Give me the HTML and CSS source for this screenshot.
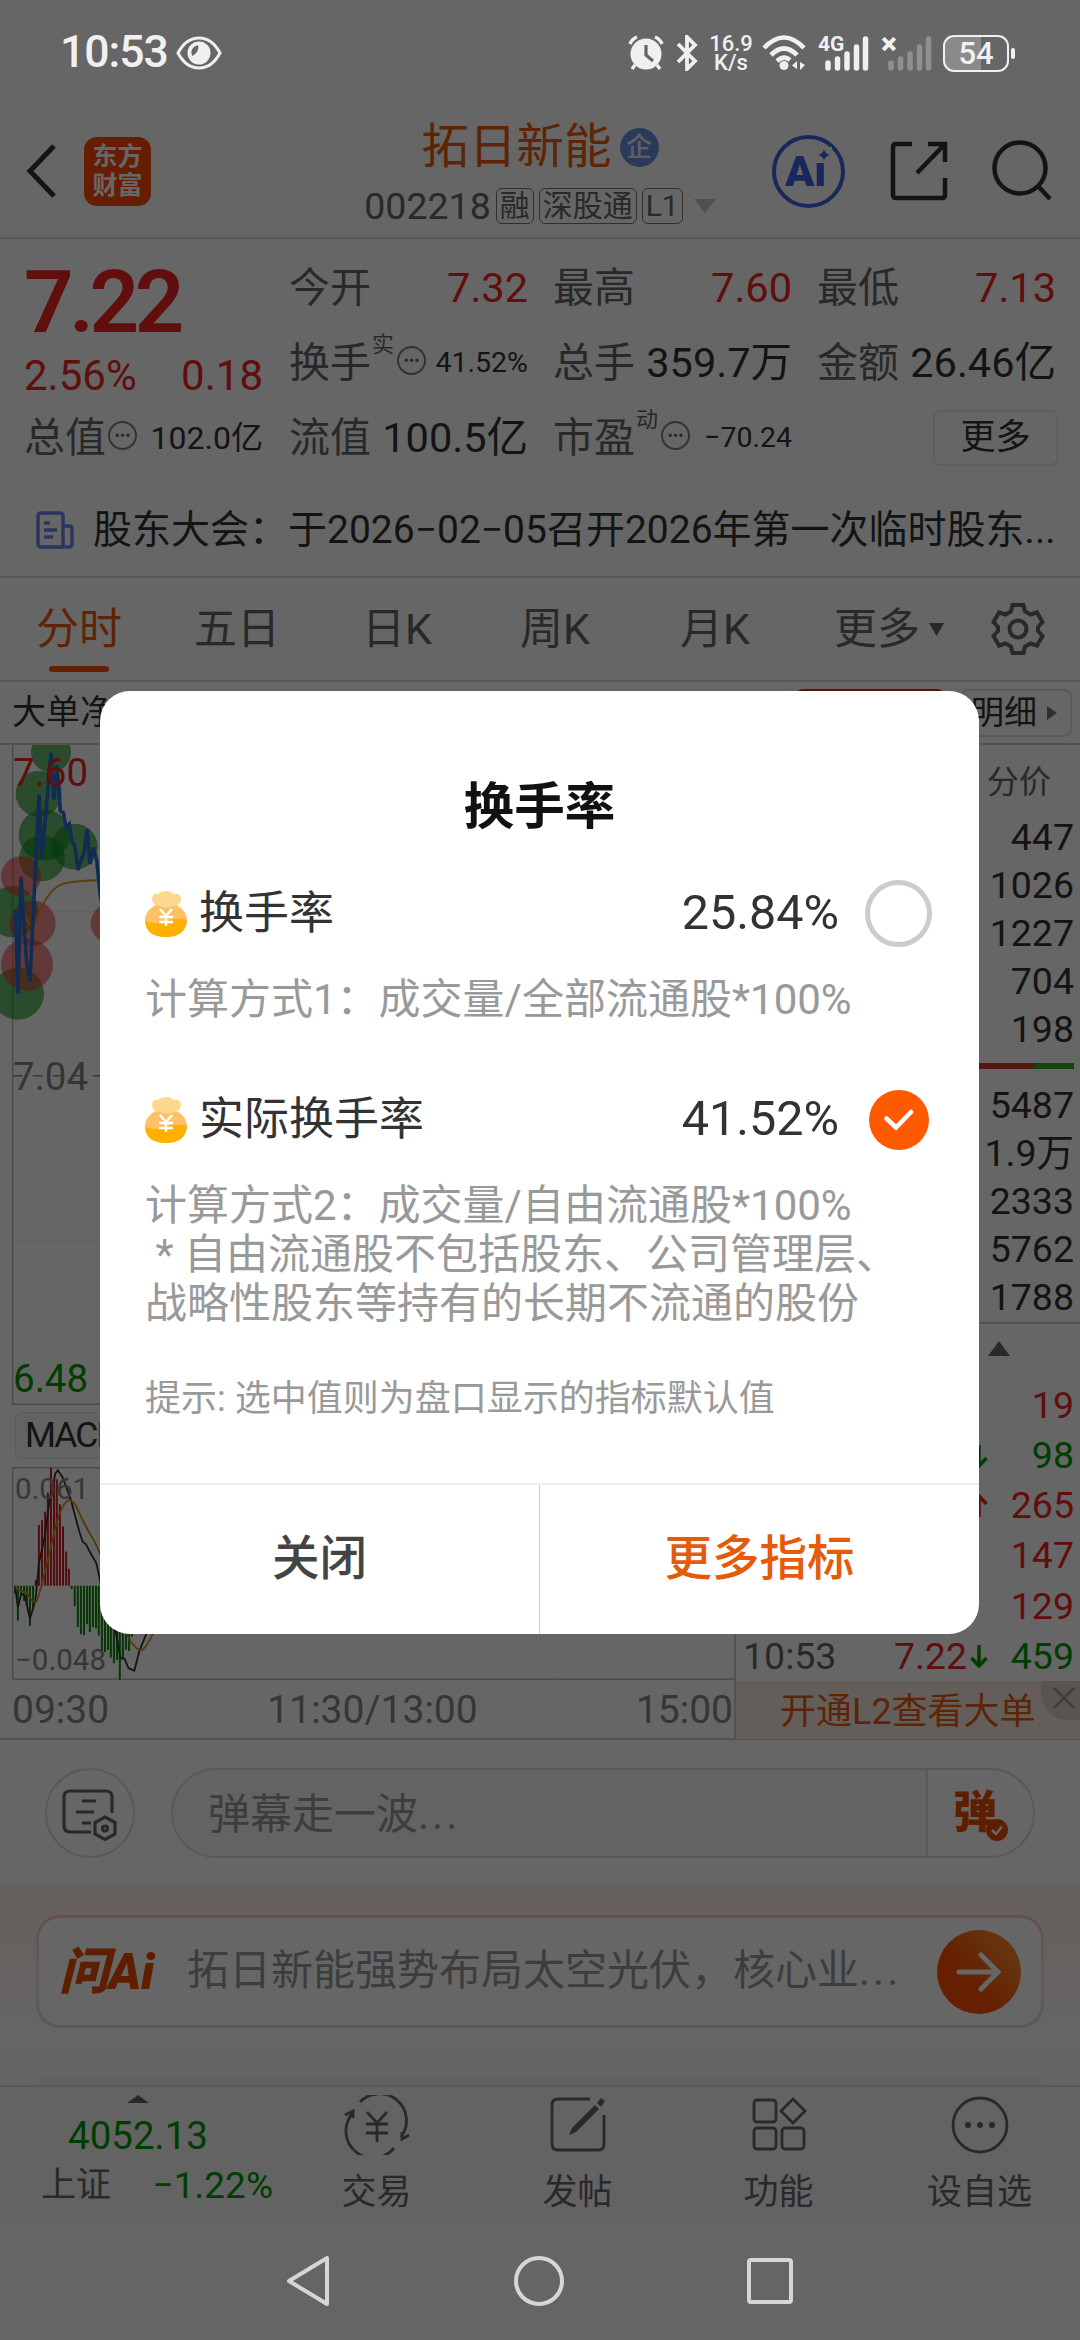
FILE: index.html
```html
<!DOCTYPE html>
<html lang="zh-CN">
<head>
  <meta charset="UTF-8">
  <meta name="viewport" content="width=device-width, initial-scale=1.0">
  <title>拓日新能 002218</title>
  <link rel="stylesheet" href="styles.css">
</head>
<body>

  <div class="app">
    <header class="header">
      <div class="header-left">
        <svg class="back" width="32" height="56" viewBox="0 0 32 56"><path d="M28 3L4 28L28 53"/></svg>
        <div class="logo"><span>东方</span><span>财富</span></div>
      </div>
      <div class="header-title">
        <div class="name">拓日新能<span class="badge">企</span></div>
        <div class="code">002218<span class="tag">融</span><span class="tag">深股通</span><span class="tag">L1</span>
          <svg width="22" height="14" viewBox="0 0 22 14"><path d="M0 0H22L11 14Z" fill="#c8c8c8"/></svg>
        </div>
      </div>
      <div class="header-right">
        <div class="ai-btn">Ai<svg width="16" height="16" viewBox="0 0 16 16"><rect width="16" height="16" fill="#fff"/><path d="M8 2Q9 7 14 8Q9 9 8 14Q7 9 2 8Q7 7 8 2Z"/></svg></div>
        <svg class="line-icon" width="58" height="60" viewBox="0 0 58 60"><path d="M22 3H6Q3 3 3 6V54Q3 57 6 57H52Q55 57 55 54V37M38 3H55V21M55 3L27 32"/></svg>
        <svg class="line-icon" width="60" height="62" viewBox="0 0 60 62"><circle cx="28" cy="28" r="25.5"/><path d="M46 46L58 59"/></svg>
      </div>
    </header>

    <section class="quote">
      <div class="quote-main">
        <div class="price">7.22</div>
        <div class="change"><span>2.56%</span><span>0.18</span></div>
        <div class="cell"><label>总值</label><i class="more-dot">•••</i><b class="small32">102.0亿</b></div>
      </div>
      <div class="quote-grid">
        <div class="cell"><label>今开</label><b class="red">7.32</b></div>
        <div class="cell"><label>最高</label><b class="red">7.60</b></div>
        <div class="cell"><label>最低</label><b class="red">7.13</b></div>
        <div class="cell"><label>换手</label><sup>实</sup><i class="more-dot">•••</i><b class="small28">41.52%</b></div>
        <div class="cell"><label>总手</label><b>359.7万</b></div>
        <div class="cell"><label>金额</label><b>26.46亿</b></div>
        <div class="cell"><label>流值</label><b>100.5亿</b></div>
        <div class="cell"><label>市盈</label><sup>动</sup><i class="more-dot">•••</i><b class="small28">−70.24</b></div>
        <div class="cell"><button class="more-btn">更多</button></div>
      </div>
    </section>

    <section class="news">
      <svg width="38" height="38" viewBox="0 0 38 38"><path d="M27 36H5Q2 36 2 33V5Q2 2 5 2H24Q27 2 27 5V36H33Q36 36 36 33V18Q36 15 33 15H27M8 12H14M8 19H21M8 26H17"/></svg>
      <p>股东大会：于2026−02−05召开2026年第一次临时股东...</p>
    </section>

    <nav class="tabs">
      <a class="active">分时</a>
      <a>五日</a>
      <a>日K</a>
      <a>周K</a>
      <a>月K</a>
      <a>更多<svg width="15" height="13" viewBox="0 0 15 13"><path d="M0 0H15L7.5 13Z"/></svg></a>
      <svg class="gear" width="54" height="54" viewBox="0 0 54 54"><path d="M21.500 3H32.500L34 9.500L39.500 12.500L46 10.500L51.500 20L47 25V29L51.500 34L46 43.500L39.500 41.500L34 44.500L32.500 51H21.500L20 44.500L14.500 41.500L8 43.500L2.500 34L7 29V25L2.500 20L8 10.500L14.500 12.500L20 9.500Z"/><circle cx="27" cy="27" r="8.500"/></svg>
    </nav>

    <div class="chart-bar">
      <span>大单净量</span>
      <div class="chart-bar-right">
        <div class="l2-tab"></div>
        <div class="detail-btn">明细<svg width="10" height="14" viewBox="0 0 10 14"><path d="M0 0L10 7L0 14Z"/></svg></div>
      </div>
    </div>

    <section class="market">
      <div class="charts">
        <div class="price-chart">
          <svg viewBox="0 195 2202 1980" preserveAspectRatio="none">
            <path class="frame" d="M38 195V2173H2202"/>
            <path class="dots" d="M38 694H2202M38 1683H2202"/>
            <path class="dash" d="M38 1187H2202"/>
            <g class="sell">
              <circle cx="153" cy="217" r="60"/><circle cx="116" cy="341" r="69"/><circle cx="133" cy="465" r="77"/>
              <circle cx="224" cy="500" r="69"/><circle cx="126" cy="535" r="69"/><circle cx="38" cy="695" r="77"/><circle cx="54" cy="941" r="78"/>
            </g>
            <g class="buy">
              <circle cx="63" cy="589" r="60"/><circle cx="98" cy="730" r="69"/><circle cx="81" cy="854" r="78"/><circle cx="332" cy="730" r="60"/>
            </g>
            <path class="avg" d="M46 690L54 780L63 720Q78 700 82 722Q96 750 106 725Q112 710 122 688Q150 625 190 611Q230 602 300 600L420 606"/>
            <path class="line" d="M46 690L54 941L63 590L80 850L90 905L117 343L126 535L153 218L162 358L171 255L181 393L190 398L198 442L208 432L216 485L225 500L234 570L243 540L252 520L261 448L270 552L280 502L290 540L300 640L320 760"/>
          </svg>
          <span class="lbl top">7.60</span>
          <span class="lbl mid">7.04</span>
          <span class="lbl low">6.48</span>
        </div>
        <div class="macd-bar"><span>MACD</span></div>
        <div class="macd-chart">
          <svg viewBox="0 806 2132 595" preserveAspectRatio="none">
            <path class="frame" d="M37 1399V808H2132M37 1399H2132"/>
            <path class="dots" d="M564 808V1400M1084 808V1400M1604 808V1400"/>
            <path class="up" d="M104 1138V1122M113 1138V968M122 1138V955M131 1138V930M139 1138V877M148 1138V808M157 1138V852M165 1138V840M174 1138V910M183 1138V972M192 1138V1042M200 1138V1090"/>
            <path class="down" d="M44 1138V1160M52 1138V1235M61 1138V1165M70 1138V1180M78 1138V1195M87 1138V1250M96 1138V1205M208 1138V1147M217 1138V1195M226 1138V1253M235 1138V1273M244 1138V1276M253 1138V1245M261 1138V1267M270 1138V1253M279 1138V1257M287 1138V1277M296 1138V1325M305 1138V1323M314 1138V1317M322 1138V1338M331 1138V1354M340 1138V1345M348 1138V1400M357 1138V1340M366 1138V1316M375 1138V1320M383 1138V1280"/>
            <path class="dif" d="M44 1140L52 1198L62 1160L72 1165L87 1230L98 1195L103 1178L113 1075L130 1000L145 890L153 870L160 825L168 815L182 835L205 895L230 985L240 1015L250 1022L262 1045L280 1075L290 1120L300 1180L335 1260L350 1340L362 1342L373 1368L390 1375L405 1320L425 1272L450 1230"/>
            <path class="dea" d="M44 1142Q65 1155 80 1160Q95 1185 103 1185Q110 1180 125 1120Q140 1060 155 1000Q175 910 200 898Q215 898 228 930Q250 975 275 1015Q300 1060 330 1170Q365 1270 380 1295Q400 1320 412 1318Q425 1310 445 1270L470 1220"/>
          </svg>
          <span class="lbl top">0.061</span>
          <span class="lbl low">−0.048</span>
        </div>
        <div class="time-axis"><span>09:30</span><span>11:30/13:00</span><span>15:00</span></div>
      </div>

      <div class="side">
        <div class="side-head">分价</div>
        <div class="row5"><span>447</span><span>1026</span><span>1227</span><span>704</span><span>198</span></div>
        <div class="ratio"><i></i></div>
        <div class="row5"><span>5487</span><span>1.9万</span><span>2333</span><span>5762</span><span>1788</span></div>
        <div class="fold"><svg width="22" height="15" viewBox="0 0 22 15"><path d="M11 0L22 15H0Z"/></svg></div>
        <div class="ticks">
          <div class="tick r"><time></time><em></em><svg viewBox="0 0 18 24"></svg><b>19</b></div>
          <div class="tick g"><time></time><em></em><svg viewBox="0 0 18 24"><path d="M9 1V22M1.500 14L9 22L16.500 14"/></svg><b>98</b></div>
          <div class="tick r"><time></time><em></em><svg viewBox="0 0 18 24"><path d="M9 23V2M1.500 10L9 2L16.500 10"/></svg><b>265</b></div>
          <div class="tick r"><time></time><em></em><svg viewBox="0 0 18 24"></svg><b>147</b></div>
          <div class="tick r"><time></time><em></em><svg viewBox="0 0 18 24"></svg><b>129</b></div>
          <div class="tick g"><time>10:53</time><em>7.22</em><svg viewBox="0 0 18 24"><path d="M9 1V22M1.500 14L9 22L16.500 14"/></svg><b>459</b></div>
        </div>
        <div class="l2-banner">开通L2查看大单
          <div class="close"><svg width="22" height="22" viewBox="0 0 22 22"><path d="M1 1L21 21M21 1L1 21"/></svg></div>
        </div>
      </div>
    </section>

    <section class="danmu">
      <div class="round-btn">
        <svg width="56" height="52" viewBox="0 0 56 52"><path d="M29 43H8Q2 43 2 37V8Q2 2 8 2H44Q50 2 50 8V24M20 12H34M14 23H32M20 34H29"/><path d="M43 28L53 33.500V45L43 50.500L33 45V33.500Z"/><circle cx="43" cy="39.500" r="2.500"/></svg>
      </div>
      <div class="danmu-box">
        <div class="danmu-input">弹幕走一波<span class="ellipsis">...</span></div>
        <div class="danmu-on">弹<svg width="22" height="22" viewBox="0 0 22 22"><circle cx="11" cy="11" r="11"/><path d="M6 11L10 15L16 7.500"/></svg></div>
      </div>
    </section>

    <section class="ask">
      <div class="ask-card">
        <div class="ask-logo">问Ai</div>
        <p>拓日新能强势布局太空光伏，核心业<span class="ellipsis">...</span></p>
        <div class="go"><svg width="46" height="40" viewBox="0 0 46 40"><path d="M3 20H41M25 3L42 20L25 37"/></svg></div>
      </div>
      <div class="next-card"></div>
    </section>

    <footer class="tabbar">
      <div class="index">
        <svg width="22" height="8" viewBox="0 0 22 8"><path d="M11 0L22 8H0Z"/></svg>
        <div class="index-val">4052.13</div>
        <div class="index-row"><span>上证</span><b>−1.22%</b></div>
      </div>
      <div class="item">
        <svg viewBox="0 0 66 60"><path d="M16 7A27 27 0 0 1 57 42M50 53A27 27 0 0 1 8 19M1 20L9 16V23M65 40L58 44V37"/><path d="M23 17L33 28L43 17M33 28V47M22 29H44M22 38H44"/></svg>
        <span>交易</span>
      </div>
      <div class="item">
        <svg viewBox="0 0 66 60"><path d="M45 4H13Q7 4 7 10V49Q7 55 13 55H53Q59 55 59 49V20"/><path class="fill" d="M27 33L50 10L54 14L31 37L24 40ZM52 8L56 3L60 6L56 12Z"/></svg>
        <span>发帖</span>
      </div>
      <div class="item">
        <svg viewBox="0 0 66 60"><rect x="8" y="5" width="22" height="22" rx="3"/><rect x="8" y="33" width="22" height="21" rx="3"/><rect x="36" y="33" width="22" height="21" rx="3"/><path d="M47 4L59 16L47 28L35 16Z"/></svg>
        <span>功能</span>
      </div>
      <div class="item">
        <svg viewBox="0 0 66 60"><circle cx="33" cy="30" r="27"/><g class="fill"><circle cx="21" cy="30" r="3"/><circle cx="33" cy="30" r="3"/><circle cx="45" cy="30" r="3"/></g></svg>
        <span>设自选</span>
      </div>
    </footer>
  </div>

  <div class="overlay">
    <div class="dialog">
      <h2>换手率</h2>
      <div class="option">
        <svg class="bag" viewBox="0 0 42 46"><ellipse cx="21" cy="29" rx="21" ry="17" fill="#ffc166"/><path d="M0 30Q10 34 21 30T42 29Q41 46 21 46T0 30Z" fill="#ffb000"/><path d="M7 8Q7 2 13 3Q16 0 21 0Q26 0 28 3Q36 2 36 8Q36 15 28 15Q21 18 14 15Q7 14 7 8Z" fill="#ffd88f"/><path d="M15 18L21 25L27 18M21 25V35M14 26H28M14 31H28" fill="none" stroke="#fff" stroke-width="2.400"/></svg>
        <span class="opt-name">换手率</span>
        <span class="opt-val">25.84%</span>
        <i class="radio"></i>
      </div>
      <p class="desc">计算方式1：成交量/全部流通股*100%</p>
      <div class="option">
        <svg class="bag" viewBox="0 0 42 46"><ellipse cx="21" cy="29" rx="21" ry="17" fill="#ffc166"/><path d="M0 30Q10 34 21 30T42 29Q41 46 21 46T0 30Z" fill="#ffb000"/><path d="M7 8Q7 2 13 3Q16 0 21 0Q26 0 28 3Q36 2 36 8Q36 15 28 15Q21 18 14 15Q7 14 7 8Z" fill="#ffd88f"/><path d="M15 18L21 25L27 18M21 25V35M14 26H28M14 31H28" fill="none" stroke="#fff" stroke-width="2.400"/></svg>
        <span class="opt-name">实际换手率</span>
        <span class="opt-val">41.52%</span>
        <i class="radio checked"><svg width="30" height="22" viewBox="0 0 30 22"><path d="M2.500 9.500L12 18.500L27 3"/></svg></i>
      </div>
      <p class="desc">计算方式2：成交量/自由流通股*100%<br>&nbsp;* 自由流通股不包括股东、公司管理层、<br>战略性股东等持有的长期不流通的股份</p>
      <p class="hint">提示: 选中值则为盘口显示的指标默认值</p>
      <div class="actions">
        <button>关闭</button>
        <button class="primary">更多指标</button>
      </div>
    </div>
  </div>

  <div class="status">
    <div class="status-left">
      <span>10:53</span>
      <svg width="46" height="34" viewBox="0 0 46 34"><path d="M2 17Q10 2 23 2T44 17Q36 32 23 32T2 17Z" fill="none" stroke="#f0f0f0" stroke-width="3"/><circle cx="23" cy="17" r="11.500" fill="#f0f0f0"/><path d="M22 9Q24 16 16 20Q13 12 22 9Z" fill="#666"/></svg>
    </div>
    <div class="status-right">
      <svg width="36" height="36" viewBox="0 0 36 36"><circle cx="18" cy="19" r="15.500" fill="#f0f0f0"/><path d="M18 10V20L25 26" stroke="#666" stroke-width="3.200" fill="none"/><path d="M2 9Q4 4 9 2M34 9Q32 4 27 2M7 30L4 34M29 30L32 34" stroke="#f0f0f0" stroke-width="3.400" fill="none"/></svg>
      <svg class="bt" width="22" height="36" viewBox="0 0 22 36"><path d="M2 9L19 26L11 34V2L19 10L2 27" fill="none" stroke="#f0f0f0" stroke-width="3.800"/></svg>
      <div class="speed"><span>16.9</span><span>K/s</span></div>
      <svg class="wifi" width="44" height="36" viewBox="0 0 44 36"><path d="M2 13Q22 -8 42 13M9 20Q22 7 35 20M15 26Q22 20 28 25" fill="none" stroke="#f0f0f0" stroke-width="4.600"/><circle cx="22" cy="30.500" r="4.500" fill="#f0f0f0"/><path d="M35 26V34L30 30.500ZM38 27V35L43 30Z" fill="#f0f0f0"/></svg>
      <div class="signal"><span>4G</span><svg width="44" height="36" viewBox="0 0 44 36"><path d="M3 28V33M12.500 24V33M22 19V33M31.500 12V33M40.500 4V33"/></svg></div>
      <div class="signal none"><span>×</span><svg width="44" height="36" viewBox="0 0 44 36"><path d="M3 28V33M12.500 24V33M22 19V33M31.500 12V33M40.500 4V33"/></svg></div>
      <div class="battery">54</div>
      <i class="knob"></i>
    </div>
  </div>

  <div class="sysnav">
    <svg width="44" height="52" viewBox="0 0 44 52"><path d="M41 3V49L3 26Z"/></svg>
    <svg width="50" height="50" viewBox="0 0 50 50"><circle cx="25" cy="25" r="23"/></svg>
    <svg width="46" height="46" viewBox="0 0 46 46"><rect x="2" y="2" width="42" height="42" rx="2"/></svg>
  </div>

</body>
</html>
```

FILE: styles.css
```css
* {
  margin: 0;
  padding: 0;
  box-sizing: border-box;
}

html, body {
  width: 1080px;
  height: 2340px;
  overflow: hidden;
}

body {
  font-family: Roboto, "Noto Sans CJK SC", sans-serif;
  line-height: 1.2;
  background: #fdfdfd;
  color: #333;
  position: relative;
}

i, em {
  font-style: normal;
}

b {
  font-weight: 400;
}

svg {
  display: block;
  flex-shrink: 0;
}

button {
  font-family: inherit;
  line-height: 1.2;
  background: none;
  border: none;
}

.ellipsis {
  letter-spacing: 3px;
}

.app {
  height: 2222px;
  padding-top: 106px;
  background: #fff;
  display: flex;
  flex-direction: column;
}

/* header */
.header {
  height: 133px;
  display: grid;
  grid-template-columns: 300px 480px 300px;
  border-bottom: 2px solid #ddd;
}

.header-left {
  display: flex;
  align-items: center;
  padding-left: 26px;
  gap: 26px;
}

.back {
  fill: none;
  stroke: #333;
  stroke-width: 5;
}

.logo {
  width: 67px;
  height: 69px;
  border-radius: 13px;
  background: #ff4a00;
  color: #fff;
  font-size: 25px;
  font-weight: 700;
  line-height: 29px;
  display: flex;
  flex-direction: column;
  align-items: center;
  justify-content: center;
}

.header-title {
  display: flex;
  flex-direction: column;
  align-items: center;
  padding-top: 11px;
}

.name {
  font-size: 47.5px;
  line-height: 60px;
  color: #e85a10;
  display: flex;
  align-items: center;
  gap: 8px;
}

.badge {
  width: 39px;
  height: 39px;
  border-radius: 50%;
  background: #6a92e0;
  color: #eee;
  font-size: 26px;
  font-weight: 500;
  line-height: 38px;
  text-align: center;
}

.code {
  font-size: 37.5px;
  line-height: 58px;
  color: #666;
  display: flex;
  align-items: center;
  gap: 5px;
}

.code svg {
  margin-left: 6px;
}

.tag {
  font-size: 30px;
  line-height: 34px;
  height: 36px;
  padding: 0 3px;
  border: 1px solid #777;
  border-radius: 6px;
}

.header-right {
  display: flex;
  align-items: center;
  justify-content: space-between;
  padding: 0 28px 0 0;
  margin-left: -8px;
}

.ai-btn {
  position: relative;
  width: 73px;
  height: 73px;
  border: 4px solid #3c64e6;
  border-radius: 50%;
  color: #3c64e6;
  font-size: 43px;
  font-weight: 900;
  line-height: 65px;
  padding-left: 9px;
}

/* star sits over the dot of the letter i */
.ai-btn svg {
  position: absolute;
  left: 40px;
  top: 8px;
  fill: #3c64e6;
}

.line-icon {
  fill: none;
  stroke: #333;
  stroke-width: 4.5;
}

/* quote */
.quote {
  display: flex;
  gap: 26px;
  padding: 12px 24px 0 24px;
  height: 245px;
}

.quote-main {
  width: 239px;
}

.price {
  height: 100px;
  line-height: 102px;
  font-size: 87px;
  font-weight: 600;
  letter-spacing: -4.5px;
  color: #ef2424;
}

.change {
  height: 50px;
  line-height: 50px;
  font-size: 42px;
  color: #ef2424;
  display: flex;
  justify-content: space-between;
}

.quote-grid {
  flex: 1;
  display: grid;
  grid-template-columns: repeat(3, 239px);
  grid-auto-rows: 75px;
  column-gap: 25px;
}

.cell {
  height: 75px;
  display: flex;
  align-items: center;
}

.cell label {
  font-size: 41px;
  color: #666;
}

.cell b {
  margin-left: auto;
  font-size: 41.5px;
  white-space: nowrap;
}

.cell b.small32 {
  font-size: 32px;
}

.cell b.small28 {
  font-size: 28.5px;
}

.cell .red {
  color: #ef2424;
}

.cell sup {
  font-size: 22px;
  color: #666;
  align-self: flex-start;
  line-height: 30px;
  margin: 4px 1px 0 1px;
}

.more-dot {
  width: 29px;
  height: 29px;
  border: 2px solid #808080;
  border-radius: 50%;
  color: #666;
  font-size: 16px;
  line-height: 25px;
  text-align: center;
  letter-spacing: 0;
  margin-bottom: 5px;
  margin-left: 2px;
}

.more-btn {
  margin-left: auto;
  margin-right: -2px;
  width: 125px;
  height: 56px;
  border: 2px solid #ebebeb;
  border-radius: 7px;
  font-size: 35px;
  color: #333;
}

/* news */
.news {
  height: 95px;
  display: flex;
  align-items: center;
  padding-left: 36px;
  gap: 19px;
  border-bottom: 2px solid #ddd;
}

.news svg {
  fill: none;
  stroke: #6a88f0;
  stroke-width: 3.5;
}

.news p {
  font-size: 39px;
  white-space: nowrap;
}

/* tabs */
.tabs {
  height: 104px;
  display: grid;
  grid-template-columns: 158px 168px 158px 160px 154px 157px auto;
  align-items: center;
  padding-left: 36px;
  border-bottom: 2px solid #ddd;
  font-size: 43px;
  color: #666;
}

.tabs a {
  position: relative;
  line-height: 102px;
  display: flex;
  align-items: center;
  gap: 9px;
}

.tabs a svg {
  fill: #666;
}

.tabs .active {
  color: #e85a10;
}

.tabs .active::after {
  content: "";
  position: absolute;
  left: 13px;
  bottom: 8px;
  width: 60px;
  height: 6px;
  border-radius: 3px;
  background: #f05500;
}

.gear {
  fill: none;
  stroke: #666;
  stroke-width: 4;
}

/* chart toolbar */
.chart-bar {
  height: 63px;
  display: flex;
  align-items: center;
  justify-content: space-between;
  padding: 0 8px 0 12px;
  border-bottom: 2px solid #ccc;
  font-size: 34px;
}

.chart-bar-right {
  display: flex;
  gap: 15px;
}

.l2-tab {
  width: 150px;
  height: 48px;
  background: #c63a10;
  border-radius: 8px;
}

.detail-btn {
  width: 112px;
  height: 48px;
  border: 2px solid #e2e2e2;
  border-radius: 8px;
  display: flex;
  align-items: center;
  justify-content: flex-end;
  gap: 10px;
  padding-right: 13px;
  white-space: nowrap;
  font-size: 33px;
}

.detail-btn svg {
  fill: #777;
}

/* charts */
.market {
  height: 995px;
  display: flex;
  border-bottom: 2px solid #ccc;
}

.charts {
  width: 734px;
}

.charts svg {
  width: 734px;
  height: 100%;
}

.charts path {
  fill: none;
  vector-effect: non-scaling-stroke;
}

.frame {
  stroke: #bbb;
  stroke-width: 1.5;
}

.dots {
  stroke: #bbb;
  stroke-width: 1;
  stroke-dasharray: 1 3;
}

.dash {
  stroke: #888;
  stroke-width: 1.5;
  stroke-dasharray: 10 10;
}

.lbl {
  position: absolute;
  left: 13px;
  font-size: 38.5px;
  line-height: 40px;
}

.price-chart {
  position: relative;
  height: 660px;
}

.price-chart .top {
  top: 8px;
  color: #ef2424;
}

.price-chart .mid {
  top: 312px;
  color: #888;
}

.price-chart .low {
  bottom: 6px;
  color: #009a00;
}

.sell {
  fill: #0a8f14;
  fill-opacity: 0.6;
}

.buy {
  fill: #f03030;
  fill-opacity: 0.55;
}

.avg {
  stroke: #e8971e;
  stroke-width: 1.8;
}

.line {
  stroke: #2c6fd0;
  stroke-width: 3.6;
}

.macd-bar {
  height: 62px;
  padding: 7px 0 0 15px;
}

.macd-bar span {
  display: block;
  width: 150px;
  height: 47px;
  padding-left: 9px;
  background: #f7f7f7;
  border: 1px solid #e0e0e0;
  border-radius: 8px;
  font-size: 35.5px;
  letter-spacing: -2px;
  line-height: 45px;
}

.macd-chart {
  position: relative;
  height: 213px;
}

.macd-chart .lbl {
  left: 15px;
  font-size: 29.5px;
  color: #888;
}

.macd-chart .top {
  top: 2px;
}

.macd-chart .low {
  bottom: 0;
}

.up {
  stroke: #d22020;
  stroke-width: 2;
}

.down {
  stroke: #0a8a0a;
  stroke-width: 2;
}

.dif {
  stroke: #333;
  stroke-width: 1.8;
}

.dea {
  stroke: #d48a20;
  stroke-width: 1.8;
}

.time-axis {
  height: 60px;
  display: flex;
  justify-content: space-between;
  align-items: center;
  padding: 0 1px 0 12px;
  font-size: 39px;
  color: #888;
}

.side {
  flex: 1;
  border-left: 2px solid #ccc;
}

.side-head {
  height: 69px;
  line-height: 74px;
  padding-right: 29px;
  text-align: right;
  font-size: 32px;
  color: #666;
}

.row5 {
  display: flex;
  flex-direction: column;
  text-align: right;
  padding-right: 6px;
  font-size: 37.5px;
}

.row5 span {
  height: 48px;
  line-height: 46px;
}

.ratio {
  height: 28px;
  padding: 9px 6px 0 10px;
}

.ratio i {
  display: block;
  height: 6px;
  background: linear-gradient(130deg, #d83a30 calc(100% - 33px), #3da52c calc(100% - 32px));
}

.fold {
  height: 58px;
  border-top: 2px solid #ccc;
  padding: 17px 0 0 252px;
}

.fold svg {
  fill: #666;
}

.ticks {
  height: 301px;
  display: flex;
  flex-direction: column;
}

.tick {
  flex: 1;
  display: grid;
  grid-template-columns: 1fr auto 18px 83px;
  align-items: center;
  column-gap: 3px;
  padding: 0 6px 0 7px;
  font-size: 37.5px;
}

.tick svg {
  width: 18px;
  height: 24px;
  fill: none;
  stroke: currentColor;
  stroke-width: 3.5;
}

.tick time {
  color: #666;
}

.tick em {
  color: #ef2424;
}

.tick b {
  text-align: right;
}

.r {
  color: #ef2424;
}

.g {
  color: #009a00;
}

.l2-banner {
  position: relative;
  height: 58px;
  line-height: 62px;
  background: #faebe0;
  color: #e85a10;
  font-size: 36px;
  padding-left: 44px;
}

.close {
  position: absolute;
  right: 0;
  top: 0;
  width: 39px;
  height: 39px;
  background: #ddd2ca;
  border-bottom-left-radius: 26px;
  padding: 6px 0 0 12px;
}

.close svg {
  stroke: #999;
  stroke-width: 2.5;
}

/* comment bar */
.danmu {
  height: 144px;
  display: flex;
  align-items: flex-start;
  padding: 28px 45px 0;
  gap: 36px;
}

.round-btn {
  width: 90px;
  height: 90px;
  border: 2px solid #dadfdf;
  border-radius: 50%;
  display: flex;
  align-items: center;
  justify-content: center;
}

.round-btn svg {
  fill: none;
  stroke: #666;
  stroke-width: 3.2;
  margin-top: 4px;
}

.danmu-box {
  flex: 1;
  height: 90px;
  border: 2px solid #dadfdf;
  border-radius: 45px;
  display: flex;
  overflow: hidden;
}

.danmu-input {
  flex: 1;
  background: #f7f7f7;
  padding-left: 35px;
  line-height: 90px;
  font-size: 42px;
  color: #999;
}

.danmu-on {
  position: relative;
  width: 107px;
  border-left: 2px solid #dadfdf;
  padding-left: 25px;
  font-size: 44px;
  font-weight: 900;
  line-height: 86px;
  color: #ec4c00;
}

.danmu-on svg {
  position: absolute;
  left: 58px;
  top: 49px;
  fill: #ec4c00;
}

.danmu-on svg path {
  fill: none;
  stroke: #fff;
  stroke-width: 2.5;
}

/* ask card */
.ask {
  height: 201px;
  padding: 31px 36px 0;
  background: linear-gradient(#fdf0e8, #fdf3ee 30%, #fefdfc 75%, #faf9f7);
}

.ask-card {
  height: 113px;
  border: 3px solid transparent;
  border-radius: 24px;
  background: linear-gradient(#fff, #fff) padding-box, linear-gradient(#fcc8bd, #f0dedd 50%, #d5dfec) border-box;
  display: flex;
  align-items: center;
  padding: 0 20px;
}

.ask-logo {
  width: 128px;
  font-size: 50px;
  font-weight: 900;
  font-style: italic;
  letter-spacing: -0.5px;
  color: #ec4c00;
}

.ask-card p {
  flex: 1;
  font-size: 42px;
  color: #999;
  white-space: nowrap;
}

.go {
  width: 84px;
  height: 84px;
  border-radius: 50%;
  background: linear-gradient(50deg, #ff5200 40%, #ff9a40);
  display: flex;
  align-items: center;
  justify-content: center;
}

.go svg {
  fill: none;
  stroke: #fff;
  stroke-width: 5;
  stroke-linecap: round;
}

.next-card {
  height: 8px;
  margin: 49px 2px 0;
  border-radius: 24px 24px 0 0;
  background: #fbeee6;
}

/* tab bar */
.tabbar {
  height: 137px;
  background: #f8f8f8;
  border-top: 2px solid #ddd;
  display: flex;
}

.index {
  width: 276px;
  padding: 8px 3px 0 41px;
}

.index > svg {
  margin-left: 86px;
  fill: #666;
}

.index-val {
  margin-left: 27px;
  font-size: 38.5px;
  line-height: 40px;
  margin-top: 13px;
  color: #009a00;
}

.index-row {
  display: flex;
  justify-content: space-between;
  align-items: center;
  font-size: 35px;
  line-height: 60px;
  color: #666;
}

.index-row b {
  font-size: 37px;
  color: #009a00;
}

.item {
  width: 201px;
  display: flex;
  flex-direction: column;
  align-items: center;
  padding-top: 8px;
  font-size: 35px;
  color: #666;
}

.item svg {
  width: 66px;
  height: 60px;
  fill: none;
  stroke: #666;
  stroke-width: 2.8;
}

.item .fill {
  fill: #666;
  stroke: none;
}

.item span {
  line-height: 44px;
  margin-top: 16px;
}

/* dialog */
.overlay {
  position: absolute;
  inset: 0;
  background: rgba(0, 0, 0, 0.6);
  display: flex;
  justify-content: center;
  align-items: flex-start;
  padding-top: 691px;
}

.dialog {
  width: 879px;
  height: 943px;
  margin-right: 1px;
  background: #fff;
  border-radius: 30px;
  overflow: hidden;
  display: flex;
  flex-direction: column;
}

.dialog h2 {
  padding-top: 81px;
  font-size: 50.5px;
  font-weight: 600;
  line-height: 70px;
  text-align: center;
  color: #111;
}

.option {
  display: flex;
  align-items: center;
  height: 67px;
  padding: 0 47px 0 45px;
  margin-top: 38px;
}

.bag {
  width: 42px;
  height: 46px;
}

.opt-name {
  margin-left: 12px;
  font-size: 45px;
}

.opt-val {
  margin-left: auto;
  margin-right: 26px;
  font-size: 48.5px;
}

.radio {
  width: 67px;
  height: 67px;
  border: 5px solid #ccc;
  border-radius: 50%;
}

.radio.checked {
  width: 60px;
  height: 60px;
  margin: 0 3px 0 4px;
  border: none;
  background: #ff5a00;
  display: flex;
  align-items: center;
  justify-content: center;
}

.radio svg {
  fill: none;
  stroke: #fff;
  stroke-width: 4.5;
  stroke-linecap: round;
}

.desc {
  margin: 28px 0 0 45px;
  font-size: 42px;
  line-height: 49px;
  color: #999;
  white-space: nowrap;
}

.desc + .option {
  margin-top: 62px;
}

.hint {
  margin: 46px 0 0 45px;
  font-size: 36px;
  line-height: 50px;
  color: #999;
}

.actions {
  margin-top: auto;
  height: 151px;
  border-top: 2px solid #eee;
  display: flex;
}

.actions button {
  flex: 1;
  font-size: 47.5px;
  font-weight: 500;
  color: #444;
}

.actions .primary {
  border-left: 1px solid #ccc;
  color: #e65a0c;
}

/* system status bar */
.status {
  position: absolute;
  top: 0;
  left: 0;
  right: 0;
  height: 106px;
  padding: 0 65px 0 60px;
  display: flex;
  align-items: center;
  justify-content: space-between;
  color: #f0f0f0;
}

.status-left, .status-right {
  display: flex;
  align-items: center;
}

.status-left {
  font-size: 44.5px;
  font-weight: 500;
  gap: 8px;
  letter-spacing: -1px;
}

.bt {
  margin-left: 12px;
}

.speed {
  width: 44px;
  margin-left: 11px;
  display: flex;
  flex-direction: column;
  align-items: center;
  font-size: 22px;
  font-weight: 500;
  line-height: 19px;
}

.wifi {
  margin-left: 9px;
}

.signal {
  position: relative;
  margin-left: 19px;
}

.signal span {
  position: absolute;
  left: -7px;
  top: -2px;
  font-size: 21px;
  font-weight: 700;
  line-height: 22px;
}

.signal path {
  stroke: #f0f0f0;
  stroke-width: 5.5;
  stroke-linecap: round;
}

.signal.none path {
  stroke: #8f8f8f;
}

.signal.none span {
  font-size: 30px;
  font-weight: 900;
}

.battery {
  width: 66px;
  height: 37px;
  margin-left: 11px;
  border: 2.5px solid #f0f0f0;
  border-radius: 11px;
  background: linear-gradient(90deg, #8a8a8a 58%, transparent 58%);
  font-size: 31px;
  font-weight: 500;
  line-height: 33px;
  text-align: center;
}

.knob {
  width: 4px;
  height: 11px;
  margin-left: 2px;
  border-radius: 2px;
  background: #f0f0f0;
}

/* system navigation */
.sysnav {
  position: absolute;
  left: 286px;
  right: 287px;
  top: 2255px;
  display: flex;
  align-items: center;
  justify-content: space-between;
}

.sysnav svg {
  fill: none;
  stroke: #d6d6d6;
  stroke-width: 4;
  stroke-linejoin: round;
}
```
